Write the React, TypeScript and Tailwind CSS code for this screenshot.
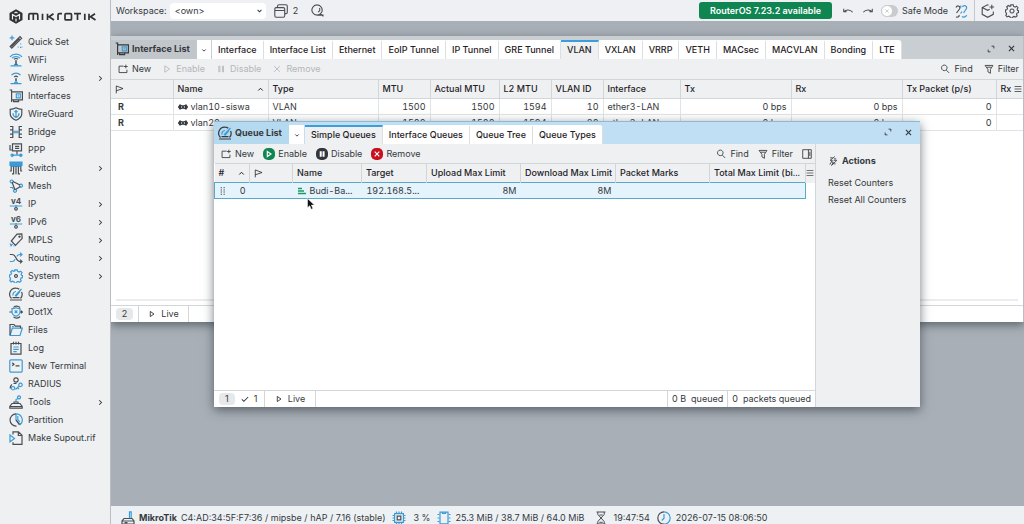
import React from 'react';

type IconDef = { dark?: string; blue?: string; text?: string };

// 14x14 two-tone line icons
const ICONS: Record<string, IconDef> = {
  quickset: { dark: 'M1.2 11.5L11 1.7l1.6 1.6-9.8 9.8zM9.3 3.4l1.6 1.6M2.5 11.5l8-8', blue: 'M3 .6v4.6M.7 2.9h4.6M11.6 8.6v1M11.6 11.8v1.2M8.6 12h1.1M12.6 12h.8' },
  wifi: { dark: 'M5 6.2c1-.9 3-.9 4 0M7 7v5', blue: 'M1 3.8C4 .2 10 .2 13 3.8M3 5.2c2-2.2 6-2.2 8 0M7 8v4M1.5 12.8h11M5.3 12.6c0-2 3.4-2 3.4 0' },
  wireless: { dark: 'M5.2 6c.9-.8 2.7-.8 3.6 0M7 7v3', blue: 'M2.5 4.2c2.4-2.8 6.6-2.8 9 0M7 8v4M1.5 12.6h11M5.3 12.4c0-1.9 3.4-1.9 3.4 0' },
  interfaces: { dark: 'M.6 1h2v12M2.6 2.8h10.8v8H2.6M4.6 10.8v1.8h5v-1.8', blue: 'M7.3 4.8h4v4h-4zM9.3 6.2v1.2' },
  wireguard: { dark: 'M7 .8c2 1.2 4 1.5 5.8 1.5v4.5c0 3-2.6 5.2-5.8 6.5-3.2-1.3-5.8-3.5-5.8-6.5V2.3C3 2.3 5 2 7 .8z', blue: 'M7 3.5v7M4 6.2c0 2.3 1.2 3.6 3 4.2 1.8-.6 3-1.9 3-4.2M5.5 5L7 3.5 8.5 5' },
  bridge: { dark: 'M1 1.5h2.8v11H1M3.8 4.8H1M3.8 9.2H1M13 1.5h-2.8v11H13M10.2 4.8H13M10.2 9.2H13', blue: 'M3.8 7h6.4M6 5.5v3M8 5.5v3' },
  ppp: { dark: 'M3.5.9h9v7h-9zM6 3.4h4.2M6 5.4h4.2M1 2v5h2M8 8v3.5', blue: 'M3 12.2h10M3.2 11a1.2 1.2 0 1 0 .01 0M11.8 11a1.2 1.2 0 1 0 .01 0' },
  switch: { dark: 'M2.2 5.5V10H.8M4.6 5.5v7.3H3M7 5.5v7.7M9.4 5.5v7.3H11M11.8 5.5V10h1.4', blue: 'M1 1.2h12v1H1zM1 3.4h12v1H1zM1.5 5.3h11' },
  mesh: { dark: 'M3 3l3 8M6.5 10.5l5-3M11 6L4 2.5', blue: 'M2.7 1a1.5 1.5 0 1 0 .01 0M12 5.2a1.5 1.5 0 1 0 .01 0M6 10.3a1.5 1.5 0 1 0 .01 0M1 8.5h2.5L4 10' },
  ip: { text: 'v4', dark: 'M7 10.5a1.3 1.3 0 1 0 .01 0', blue: 'M.8 9h12.4M7 8v2' },
  ipv6: { text: 'v6', dark: 'M7 10.5a1.3 1.3 0 1 0 .01 0', blue: 'M.8 9h12.4M7 8v2' },
  mpls: { dark: 'M8 1.2l4.8-.4.4 4.6-6.7 7L2.3 8zM10.5 3a.6.6 0 1 0 .01 0', blue: 'M.8 10.5l2 2.5M3.5 10.8l-2 2.5M4.5 13h1' },
  routing: { dark: 'M.8 3.5h2.5c4 0 3.5 7 7.5 7h2M11 8.6l2 1.9-2 1.9', blue: 'M.8 10.5h2.5c1.5 0 2.2-1 2.8-2.2M7.8 5.5c.6-1.2 1.4-2 3-2h2M11 1.6l2 1.9-2 1.9' },
  system: { dark: 'M7 5.6a1.4 1.4 0 1 0 .01 0', blue: 'M5.8.8h2.4l.4 1.6 1.5.7 1.5-.9 1.4 1.5-.9 1.5.6 1.3.8.1v2l-1.5.5-.5 1.4.7 1.4-1.6 1.3-1.5-.8-1.2.5-.4 1.2H5.5l-.6-1.4-1.4-.5-1.4.7-1.3-1.5.8-1.4-.5-1.3L.5 8V6l1.4-.4.6-1.4-.8-1.4 1.5-1.3 1.5.8 1.2-.5z' },
  queues: { dark: 'M2.5 11.5A6 6 0 0 1 7 1.2c1.3 0 2.4.4 3.3 1M12.6 5a6 6 0 0 1-1.1 6.5M1 13h12M3.5 10.7h7', blue: 'M6 9l6.5-7M4 8.5a3.2 3.2 0 0 1 3-4M7 9.5l4-5' },
  dot1x: { dark: 'M.4 7h2.4M11.2 7h2.4M4.5 2.5C5.5.6 9 .5 11 2.5M4.5 11.8c2 2 5 1.5 6.5-.3M12 5.8L13.5 7 12 8.2', blue: 'M3 3.7c1.5 0 3-.4 4-1 1 .6 2.5 1 4 1V7c0 2-1.8 3.5-4 4.3C4.8 10.5 3 9 3 7zM5.7 5.5l2.6 2.6M8.3 5.5L5.7 8.1' },
  files: { dark: 'M1 12V1.5h4l1.3 1.7h5.2v2', blue: 'M1 12.5l2.3-7.3h10L11 12.5zM3 3.5h2' },
  log: { dark: 'M2 2.5h10v10.7H2zM4.5.8v2.7M7 .8v2.7M9.5.8v2.7', blue: 'M4.3 6h5.4M4.3 8.3h5.4M4.3 10.6h3.4' },
  terminal: { dark: 'M3.2 3.8L5 5.3 3.2 6.8M6.5 6.8h4', blue: 'M2 .8h10A1.2 1.2 0 0 1 13.2 2v10a1.2 1.2 0 0 1-1.2 1.2H2A1.2 1.2 0 0 1 .8 12V2A1.2 1.2 0 0 1 2 .8z' },
  radius: { dark: 'M7 .8a2.2 2.2 0 1 0 .01 0M3 7.5C1.5 8.5 1 9.5 1.2 11.5M4.5 6.5h3', blue: 'M11.5 6.2a1.7 1.7 0 1 0 .01 0M10.3 9l-3.8 3.5M4 9.5a1.7 1.7 0 1 0 .01 0M8.5 10.7l1.5 1.5' },
  tools: { dark: 'M3 8.5h8l2.2 3v1.7H.8v-1.7zM1 11.5h12M5 8.5V7h4v1.5', blue: 'M7 7V4.5l2-1M10 .9a1.5 1.5 0 1 0 .01 0' },
  partition: { dark: 'M7.5 13.2A6.2 6.2 0 1 1 7 .8M10.5 12L7 7', blue: 'M7 .8V7l4.4 4.4A6.2 6.2 0 0 0 7 .8M8.8 3v3.6l2 2' },
  supout: { dark: 'M4 3.5V.8h5.5L13 4.3v9H4v-2M9.3.9v3.6H13', blue: 'M1 4l4.5 3.4L1 10.8z' },
  router: { dark: 'M3 7.5h8l2 2.5v3.2H1V10zM1 10h12M3.5 11.7h3', blue: 'M8.5 7.2V.8h1.7v6.4' },
  cpu: { dark: 'M5.2 5.2h3.6v3.6H5.2z', blue: 'M2.6 2.6h8.8v8.8H2.6zM4.5.5v2M7 .5v2M9.5.5v2M4.5 11.5v2M7 11.5v2M9.5 11.5v2M.5 4.5h2M.5 7h2M.5 9.5h2M11.5 4.5h2M11.5 7h2M11.5 9.5h2' },
  memory: { dark: 'M.5 3.5h2M.5 7h2M.5 10.5h2M11.5 3.5h2M11.5 7h2M11.5 10.5h2', blue: 'M3 1.2h8v11.6H3zM5.5 1.2v1.3h3V1.2' },
  hourglass: { dark: 'M2.5 1h9M2.5 13h9M3.8 1v2.5L7 7l-3.2 3.5V13M10.2 1v2.5L7 7l3.2 3.5V13M5.3 4h3.4M5.3 11.3h3.4' },
  clock: { dark: 'M7 .8a6.2 6.2 0 0 0 0 12.4', blue: 'M7 .8a6.2 6.2 0 0 1 0 12.4M7 3v4.2L4.8 9.5' },
  windows: { dark: 'M3.5 3.5V2.2C3.5 1.3 4 .8 5 .8h7c.8 0 1.3.5 1.3 1.4v6c0 .9-.5 1.4-1.3 1.4h-1.3M.8 5c0-.9.5-1.4 1.3-1.4h7.2c.9 0 1.4.5 1.4 1.4v6.8c0 .9-.5 1.4-1.4 1.4H2.1c-.8 0-1.3-.5-1.3-1.4zM.8 6.5h9.9' },
  zoomer: { dark: 'M6.5 1a5.5 5.5 0 1 0 .01 0M9 4.5c1 1.5.5 3.5-1.5 4.2M10 10.2l3.3 3.1M8 12h5.5' },
  undo: { dark: 'M2 4.5V8h3.5M2.3 7.8C4.5 5 9.5 4.8 12.5 8.5' },
  redo: { dark: 'M12 4.5V8H8.5M11.7 7.8C9.5 5 4.5 4.8 1.5 8.5' },
  link: { dark: 'M2 3.5C3.5.5 7 2.5 5.5 5l-3 4M2 13c2 .5 3.5-.5 3-2', blue: 'M8.5 3c1-2.5 5-1 4 1.5L9.500 9M8 12.5c1.5 1 4.5.5 4.5-1.5M6.8 1.5v2M6.5 9.5L8 7.5' },
  package: { dark: 'M7.5 1.1l-1-.3-5.3 2.700v6.8l5.5 3 5.6-3V7.500M1.2 3.5l5.5 2.800 2-1M10.8.8v4.500M8.500 3h4.600' },
  gear: { dark: 'M5.8.8h2.4l.4 1.6 1.5.7 1.5-.9 1.4 1.5-.9 1.5.6 1.3.8.1v2l-1.5.5-.5 1.4.7 1.4-1.6 1.3-1.5-.8-1.2.5-.4 1.2H5.5l-.6-1.4-1.4-.5-1.4.7-1.3-1.5.8-1.4-.5-1.3L.5 8V6l1.4-.4.6-1.4-.8-1.4 1.5-1.3 1.5.8 1.2-.5zM7 5a2 2 0 1 0 .01 0' },
  add: { dark: 'M8 3H1.5v9h11V8M11 1v5M8.5 3.5h5' },
  play: { dark: 'M4 2.500l6.500 4.500L4 11.500z' },
  pause: { dark: 'M4 3h1.500v8H4zM9 3h1.500v8H9z' },
  cross: { dark: 'M3 3l8 8M11 3l-8 8' },
  find: { dark: 'M6 1.5a3.9 3.9 0 1 0 .01 0M8.8 8.5l4 4' },
  filter: { dark: 'M1.5 2h11L9 7.5V13l-3.5-2V7.5zM4 4.5h6' },
  panel: { dark: 'M1 1h12v12H1zM9 1v12M11 4v6' },
  flag: { dark: 'M2 13V1.5l10.5 4L2 9' },
  expand: { dark: 'M8 2h4v4M6 12H2V8' },
  check: { dark: 'M1.5 7.5L5 11l7.5-7.5' },
  down: { dark: 'M4 6l3 3 3-3' },
  up: { dark: 'M2.5 9L7 4.5 11.5 9' },
  right: { dark: 'M5 3.5L8.5 7 5 10.5' },
  menu: { dark: 'M1 2.6h12M1 7h12M1 11.4h12' },
  vlan: { dark: 'M3.5 3.5L.8 7l2.7 3.5M10.5 3.5L13.2 7l-2.7 3.5M5 5.2a1.8 1.8 0 1 0 .01 0M9 5.2a1.8 1.8 0 1 0 .01 0' },
  grip: { dark: 'M3 1.500h2M3 5.200h2M3 8.800h2M3 12.500h2M8 1.500h2M8 5.200h2M8 8.800h2M8 12.500h2' },
  bolt: { dark: 'M9.5.8L3 6h3l-3.5 6M11.5 4h-3M12.5 6L5 13.2l2.500-4.700h-2M8 6h4M3 2.500h3.500M8 11h2.500' },
};

function Icon({ name, size = 14, weight = 1.2, className = '' }: { name: string; size?: number; weight?: number; className?: string }) {
  const icon = ICONS[name];
  return (
    <svg width={size} height={size} viewBox="0 0 14 14" fill="none" strokeWidth={weight} aria-hidden="true" className={`shrink-0 ${className}`}>
      {icon.blue && <path d={icon.blue} stroke="#3c9bd6" />}
      {icon.dark && <path d={icon.dark} stroke="currentColor" />}
      {icon.text && (
        <text x="7" y="6.5" textAnchor="middle" fontSize="8" fontWeight="700" fill="currentColor">{icon.text}</text>
      )}
    </svg>
  );
}

interface NavItem {
  icon: string;
  label: string;
  sub?: boolean;
}

const NAV: NavItem[] = [
  { icon: 'quickset', label: 'Quick Set' },
  { icon: 'wifi', label: 'WiFi' },
  { icon: 'wireless', label: 'Wireless', sub: true },
  { icon: 'interfaces', label: 'Interfaces' },
  { icon: 'wireguard', label: 'WireGuard' },
  { icon: 'bridge', label: 'Bridge' },
  { icon: 'ppp', label: 'PPP' },
  { icon: 'switch', label: 'Switch', sub: true },
  { icon: 'mesh', label: 'Mesh' },
  { icon: 'ip', label: 'IP', sub: true },
  { icon: 'ipv6', label: 'IPv6', sub: true },
  { icon: 'mpls', label: 'MPLS', sub: true },
  { icon: 'routing', label: 'Routing', sub: true },
  { icon: 'system', label: 'System', sub: true },
  { icon: 'queues', label: 'Queues' },
  { icon: 'dot1x', label: 'Dot1X' },
  { icon: 'files', label: 'Files' },
  { icon: 'log', label: 'Log' },
  { icon: 'terminal', label: 'New Terminal' },
  { icon: 'radius', label: 'RADIUS' },
  { icon: 'tools', label: 'Tools', sub: true },
  { icon: 'partition', label: 'Partition' },
  { icon: 'supout', label: 'Make Supout.rif' },
];

const INTERFACE_TABS = ['Interface', 'Interface List', 'Ethernet', 'EoIP Tunnel', 'IP Tunnel', 'GRE Tunnel', 'VLAN', 'VXLAN', 'VRRP', 'VETH', 'MACsec', 'MACVLAN', 'Bonding', 'LTE'];
const QUEUE_TABS = ['Simple Queues', 'Interface Queues', 'Queue Tree', 'Queue Types'];

const VLANS = [
  { name: 'vlan10-siswa', id: '10' },
  { name: 'vlan20-guru', id: '20' },
];

function Logo() {
  return (
    <div className="flex h-8 shrink-0 items-center pl-[9px]">
      <svg width="88" height="15" viewBox="0 0 88 15" role="img" aria-label="MikroTik" fill="none" stroke="#303236">
        <path d="M7 .3l6.5 3.6v7.2L7 14.7.5 11.1V3.9z" fill="#303236" stroke="none" />
        <path d="M3.5 10.5v-5l3.5 2 3.5-2v5M5.5 4L7 3.2 8.5 4M7 9.5v3" stroke="#eef0f2" strokeWidth="1.2" />
        <path d="M19.8 11V6.200c0-1 .5-1.500 1.400-1.500h6.200c.9 0 1.400.5 1.400 1.500V11M24.300 4.700V11M33.500 4.700V11M38.500 4.700V11M44.500 4.700L40 7.800 45 11M49 11V6.200c0-1 .5-1.500 1.400-1.500h2.600M57 4.700h4.500c.7 0 1 .3 1 1v4.200c0 .7-.3 1-1 1H57c-.7 0-1-.3-1-1V5.700c0-.7.3-1 1-1zM65 4.700h7M68.500 4.700V11M75.800 4.700V11M80 4.700V11M86 4.700l-4.500 3.100 5 3.200" strokeWidth="1.7" />
      </svg>
    </div>
  );
}

function Sidebar() {
  return (
    <aside className="flex w-[111px] shrink-0 flex-col border-r border-[#b9bec3] bg-[#eef0f2]">
      <Logo />
      <nav className="pt-px">
        {NAV.map((item) => (
          <button key={item.label} type="button" className="flex h-[18px] w-full items-center gap-[5px] pl-[9px] pr-[5px] text-left">
            <Icon name={item.icon} className="text-[#4a4e53]" />
            <span className="grow whitespace-nowrap">{item.label}</span>
            {item.sub && <Icon name="right" size={9} weight={1.6} />}
          </button>
        ))}
      </nav>
    </aside>
  );
}

function TopBar() {
  return (
    <header className="flex h-[21px] shrink-0 items-center bg-[#eef0f3] pl-[5px] pr-[5px]">
      <label htmlFor="workspace">Workspace:</label>
      <div className="relative ml-[3px] flex items-center">
        <select id="workspace" className="h-[16px] w-[96px] appearance-none rounded-sm bg-white pl-[5px]">
          <option>&lt;own&gt;</option>
        </select>
        <Icon name="down" size={9} weight={1.6} className="pointer-events-none absolute right-[2px]" />
      </div>
      <button type="button" className="ml-[8px] flex items-center gap-[5px]">
        <Icon name="windows" weight={1.1} className="text-[#4a4e53]" />2
      </button>
      <button type="button" aria-label="Search" className="ml-[13px] text-[#4a4e53]">
        <Icon name="zoomer" size={13} />
      </button>
      <button type="button" className="ml-auto h-[17px] w-[133px] rounded-[3px] bg-[#0f8552] font-semibold text-white">RouterOS 7.23.2 available</button>
      <button type="button" aria-label="Undo" className="ml-[10px] text-[#4a4e53]"><Icon name="undo" size={12} /></button>
      <button type="button" aria-label="Redo" className="ml-[8px] text-[#4a4e53]"><Icon name="redo" size={12} /></button>
      <label className="ml-[7px] flex items-center gap-[4px]">
        <input type="checkbox" className="peer sr-only" />
        <span className="flex h-[12px] w-[17px] items-center rounded-full bg-[#c9cccf]">
          <span className="flex h-[12px] w-[12px] items-center justify-center rounded-full border border-[#c9cccf] bg-white text-[#b0b3b6]">
            <Icon name="cross" size={6} weight={1.5} />
          </span>
        </span>
        Safe Mode
      </label>
      <Icon name="link" className="ml-[6px] text-[#4a4e53]" />
      <div className="ml-[6px] flex h-[21px] items-center gap-[10px] border-l border-[#c4c8cc] pl-[6px] text-[#4a4e53]">
        <button type="button" aria-label="Packages"><Icon name="package" weight={1.1} /></button>
        <button type="button" aria-label="Settings"><Icon name="gear" weight={1.1} /></button>
      </div>
    </header>
  );
}

function Tabs({ tabs, active }: { tabs: string[]; active: string }) {
  return (
    <div role="tablist" className="flex h-[19px]">
      {tabs.map((tab) => (
        <button
          key={tab}
          type="button"
          role="tab"
          aria-selected={tab === active}
          className={`whitespace-nowrap border-r border-t-2 border-r-[#dcdfe2] px-[6px] pb-[2px] font-medium text-[#1f2225] last:rounded-tr-sm ${
            tab === active ? 'border-t-[#3b9ddc] bg-[#eef0f2]' : 'border-t-white bg-white'
          }`}
        >
          {tab}
        </button>
      ))}
    </div>
  );
}

function WindowButtons() {
  return (
    <div className="ml-auto flex items-center gap-[12px] pr-[7px] pb-[2px]">
      <button type="button" aria-label="Maximize"><Icon name="expand" size={8} weight={1.6} /></button>
      <button type="button" aria-label="Close"><Icon name="cross" size={9} weight={1.8} /></button>
    </div>
  );
}

function Tool({ icon, label, muted }: { icon: string; label: string; muted?: boolean }) {
  return (
    <button type="button" disabled={muted} className={`flex items-center gap-[4px] ${muted ? 'text-[#b4b7ba]' : ''}`}>
      <Icon name={icon} size={10} />
      {label}
    </button>
  );
}

function Badge({ icon, label, tone }: { icon: string; label: string; tone: string }) {
  return (
    <button type="button" className="flex items-center gap-[3px]">
      <span className={`flex h-[12px] w-[12px] items-center justify-center rounded-[5px] text-white ${tone}`}>
        <Icon name={icon} size={8} weight={2} />
      </span>
      {label}
    </button>
  );
}

const th = 'overflow-hidden whitespace-nowrap border-r border-[#d3d6d9] px-[4px] text-left font-medium text-[#1f2225]';
const td = 'overflow-hidden whitespace-nowrap border-r border-[#e1e4e6] px-[4px]';
const picked = 'border-[#5aa9cb] bg-[#e4f3fc]';

function InterfaceWindow() {
  return (
    <section className="absolute inset-x-0 top-[15px] flex h-[286px] flex-col border-r border-[#b9bec3] bg-white shadow-[0_3px_9px_rgba(40,50,60,0.6)]">
      <div className="flex h-[23px] shrink-0 items-end bg-[#c9ced2]">
        <h2 className="flex h-[19px] w-[86px] shrink-0 items-center gap-[3px] bg-[#c1c6cb] pb-px pl-[4px] font-bold">
          <Icon name="interfaces" />
          <span className="whitespace-nowrap">Interface List</span>
        </h2>
        <button type="button" aria-label="Windows" className="mr-px flex h-[19px] w-[14px] shrink-0 items-center justify-center bg-white">
          <Icon name="down" size={8} weight={1.6} />
        </button>
        <Tabs tabs={INTERFACE_TABS} active="VLAN" />
        <div className="ml-auto flex h-[19px]"><WindowButtons /></div>
      </div>
      <div className="flex h-[20px] shrink-0 items-center gap-[11px] bg-[#eef0f2] pl-[7px] pr-[4px]">
        <Tool icon="add" label="New" />
        <Tool icon="play" label="Enable" muted />
        <Tool icon="pause" label="Disable" muted />
        <Tool icon="cross" label="Remove" muted />
        <span className="ml-auto" />
        <Tool icon="find" label="Find" />
        <Tool icon="filter" label="Filter" />
      </div>
      <table className="w-full table-fixed border-collapse tabular-nums">
        <colgroup>
          <col className="w-[62px]" />
          <col className="w-[95px]" />
          <col className="w-[110px]" />
          <col className="w-[52px]" />
          <col className="w-[69px]" />
          <col className="w-[52px]" />
          <col className="w-[52px]" />
          <col className="w-[77px]" />
          <col className="w-[111px]" />
          <col className="w-[111px]" />
          <col className="w-[94px]" />
          <col />
        </colgroup>
        <thead>
          <tr className="h-[19px] border-y border-[#d3d6d9] bg-[#eef0f2]">
            <th className={th}><Icon name="flag" size={9} /></th>
            <th className={th}>
              <span className="flex items-center justify-between">Name<Icon name="up" size={7} weight={2} /></span>
            </th>
            <th className={th}>Type</th>
            <th className={th}>MTU</th>
            <th className={th}>Actual MTU</th>
            <th className={th}>L2 MTU</th>
            <th className={th}>VLAN ID</th>
            <th className={th}>Interface</th>
            <th className={th}>Tx</th>
            <th className={th}>Rx</th>
            <th className={th}>Tx Packet (p/s)</th>
            <th className="overflow-hidden whitespace-nowrap pl-[4px] text-left font-medium text-[#1f2225]">
              <span className="flex items-center gap-[3px]">Rx<Icon name="menu" size={8} /></span>
            </th>
          </tr>
        </thead>
        <tbody>
          {VLANS.map((vlan) => (
            <tr key={vlan.id} className="h-[16px] border-b border-[#e1e4e6]">
              <td className={`${td} pl-[7px] font-bold`}>R</td>
              <td className={td}>
                <span className="flex items-center gap-[3px]"><Icon name="vlan" size={10} weight={1.8} />{vlan.name}</span>
              </td>
              <td className={td}>VLAN</td>
              <td className={`${td} text-right`}>1500</td>
              <td className={`${td} text-right`}>1500</td>
              <td className={`${td} text-right`}>1594</td>
              <td className={`${td} text-right`}>{vlan.id}</td>
              <td className={td}>ether3-LAN</td>
              <td className={`${td} text-right`}>0 bps</td>
              <td className={`${td} text-right`}>0 bps</td>
              <td className={`${td} text-right`}>0</td>
              <td />
            </tr>
          ))}
        </tbody>
      </table>
      <div className="mx-[5px] mt-auto mb-[4px] h-[2px] bg-[#ececee]" />
      <footer className="flex h-[17px] shrink-0 border-t border-[#d3d6d9]">
        <div className="flex w-[28px] items-center justify-center border-r border-[#d3d6d9]">
          <span className="rounded bg-[#e6e8ea] px-[6px] leading-[12px]">2</span>
        </div>
        <button type="button" className="flex w-[50px] items-center justify-center gap-[5px] border-r border-[#d3d6d9]">
          <Icon name="play" size={8} weight={1.6} />Live
        </button>
      </footer>
    </section>
  );
}

function QueueWindow() {
  return (
    <section className="absolute left-[103px] top-[100px] flex h-[286px] w-[706px] flex-col border-t border-[#8fb9d2] bg-white shadow-[0_3px_10px_rgba(40,50,60,0.65)]">
      <div className="flex h-[22px] shrink-0 items-end bg-[#c1dff4]">
        <h2 className="flex h-full w-[75px] shrink-0 items-center gap-[3px] bg-[#b5d9ee] pl-[4px] font-bold">
          <Icon name="queues" />
          <span className="whitespace-nowrap">Queue List</span>
        </h2>
        <button type="button" aria-label="Windows" className="mr-px flex h-[19px] w-[15px] shrink-0 items-center justify-center bg-white">
          <Icon name="down" size={8} weight={1.6} />
        </button>
        <Tabs tabs={QUEUE_TABS} active="Simple Queues" />
        <div className="ml-auto flex h-full"><WindowButtons /></div>
      </div>
      <div className="flex min-h-0 grow">
        <div className="flex min-w-0 grow flex-col">
          <div className="flex h-[19px] shrink-0 items-center gap-[9px] bg-[#eef0f2] pl-[7px] pr-[3px]">
            <Tool icon="add" label="New" />
            <Badge icon="play" label="Enable" tone="bg-[#0f8552]" />
            <Badge icon="pause" label="Disable" tone="bg-[#33373b]" />
            <Badge icon="cross" label="Remove" tone="bg-[#c8101e]" />
            <span className="ml-auto" />
            <Tool icon="find" label="Find" />
            <Tool icon="filter" label="Filter" />
            <button type="button" aria-label="Toggle panel"><Icon name="panel" size={10} /></button>
          </div>
          <table className="w-full table-fixed border-collapse tabular-nums">
            <colgroup>
              <col className="w-[35px]" />
              <col className="w-[43px]" />
              <col className="w-[69px]" />
              <col className="w-[65px]" />
              <col className="w-[94px]" />
              <col className="w-[95px]" />
              <col className="w-[94px]" />
              <col className="w-[96px]" />
              <col />
            </colgroup>
            <thead>
              <tr className="h-[19px] border-t border-[#d3d6d9] bg-[#eef0f2]">
                <th className={th}>
                  <span className="flex items-center justify-between">#<Icon name="up" size={7} weight={2} /></span>
                </th>
                <th className={th}><Icon name="flag" size={9} /></th>
                <th className={th}>Name</th>
                <th className={th}>Target</th>
                <th className={th}>Upload Max Limit</th>
                <th className={th}>Download Max Limit</th>
                <th className={th}>Packet Marks</th>
                <th className={th}>Total Max Limit (bi...</th>
                <th><Icon name="menu" size={8} /></th>
              </tr>
            </thead>
            <tbody>
              <tr className="h-[16px] whitespace-nowrap leading-[12px]">
                <td className={`border border-r-0 px-[4px] ${picked}`}>
                  <span className="flex items-center justify-between"><Icon name="grip" size={8} weight={1.8} />0</span>
                </td>
                <td className={`border-y ${picked}`} />
                <td className={`border-y px-[5px] ${picked}`}>
                  <span className="flex items-center gap-[4px]">
                    <svg width="8" height="8" viewBox="0 0 8 8" aria-hidden="true" className="shrink-0">
                      <path d="M0 1.5h4M0 4h6M0 6.5h8" stroke="#1d9a5f" strokeWidth="1.4" />
                    </svg>
                    Budi-Ba...
                  </span>
                </td>
                <td className={`border-y px-[5px] ${picked}`}>192.168.5...</td>
                <td className={`border-y px-[4px] text-right ${picked}`}>8M</td>
                <td className={`border-y px-[4px] text-right ${picked}`}>8M</td>
                <td className={`border-y ${picked}`} />
                <td className={`border border-l-0 ${picked}`} />
                <td />
              </tr>
            </tbody>
          </table>
          <footer className="mt-auto flex h-[17px] shrink-0 border-t border-[#d3d6d9]">
            <div className="flex w-[51px] items-center gap-[6px] border-r border-[#d3d6d9] pl-[5px]">
              <span className="rounded bg-[#e6e8ea] px-[6px] leading-[12px]">1</span>
              <span className="flex items-center gap-[5px]"><Icon name="check" size={8} weight={1.8} />1</span>
            </div>
            <button type="button" className="flex w-[51px] items-center justify-center gap-[5px] border-r border-[#d3d6d9]">
              <Icon name="play" size={8} weight={1.6} />Live
            </button>
            <div className="ml-auto flex items-center gap-[5px] border-l border-[#d3d6d9] px-[4px]">
              <span>0 B</span><span>queued</span>
            </div>
            <div className="flex items-center gap-[5px] border-l border-[#d3d6d9] px-[4px]">
              <span>0</span><span>packets queued</span>
            </div>
          </footer>
        </div>
        <aside className="w-[105px] shrink-0 border-l border-[#d3d6d9] bg-[#eef0f2] pl-[12px] pt-[10px]">
          <h3 className="flex items-center gap-[4px] pb-[6px] font-bold"><Icon name="bolt" size={10} />Actions</h3>
          <button type="button" className="block h-[17px] whitespace-nowrap">Reset Counters</button>
          <button type="button" className="block h-[17px] whitespace-nowrap">Reset All Counters</button>
        </aside>
      </div>
      {/* mouse pointer */}
      <svg width="8" height="12" viewBox="0 0 8 12" aria-hidden="true" className="absolute left-[93px] top-[76px]">
        <path d="M.5.5v9.2l2.2-2 1.5 3.6 1.7-.7-1.5-3.5h3z" fill="#111" stroke="#fff" strokeWidth=".5" />
      </svg>
    </section>
  );
}

function StatusBar() {
  return (
    <footer className="flex h-[18px] shrink-0 items-center gap-[7px] whitespace-nowrap bg-[#eef1f4] pl-[10px] pt-[5px]">
      <span className="flex items-center gap-[4px]">
        <Icon name="router" className="text-[#4a4e53]" />
        <b>MikroTik</b>
        <span>C4:AD:34:5F:F7:36 / mipsbe / hAP / 7.16 (stable)</span>
      </span>
      <span className="flex items-center gap-[7px]"><Icon name="cpu" className="text-[#4a4e53]" />3 %</span>
      <span className="flex items-center gap-[4px]"><Icon name="memory" className="text-[#3c9bd6]" />25.3 MiB / 38.7 MiB / 64.0 MiB</span>
      <span className="ml-[3px] flex items-center gap-[5px]"><Icon name="hourglass" weight={1} className="text-[#4a4e53]" />19:47:54</span>
      <span className="flex items-center gap-[5px]"><Icon name="clock" className="text-[#4a4e53]" />2026-07-15 08:06:50</span>
    </footer>
  );
}

export default function App() {
  return (
    <div className="flex h-screen overflow-hidden font-['Inter','Liberation_Sans',sans-serif] text-[9px] leading-[14px] text-[#35393d]">
      <Sidebar />
      <div className="flex min-w-0 grow flex-col">
        <TopBar />
        <main className="relative grow overflow-hidden bg-[#a9afb6]">
          <InterfaceWindow />
          <QueueWindow />
        </main>
        <StatusBar />
      </div>
    </div>
  );
}
